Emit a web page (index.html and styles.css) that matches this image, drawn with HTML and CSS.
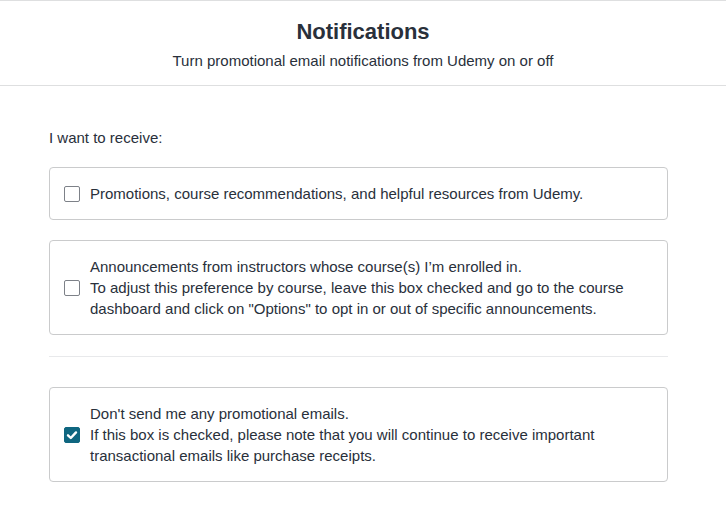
FILE: index.html
```html
<!DOCTYPE html>
<html>
<head>
<meta charset="utf-8">
<link rel="stylesheet" href="styles.css">
</head>
<body>
<header class="header">
  <h1 class="title">Notifications</h1>
  <p class="subtitle">Turn promotional email notifications from Udemy on or off</p>
</header>
<main class="content">
  <p class="lead">I want to receive:</p>
  <label class="card card-first">
    <span class="box"></span>
    <span class="text">Promotions, course recommendations, and helpful resources from Udemy.</span>
  </label>
  <label class="card">
    <span class="box"></span>
    <span class="text">Announcements from instructors whose course(s) I’m enrolled in.<br>To adjust this preference by course, leave this box checked and go to the course dashboard and click on "Options" to opt in or out of specific announcements.</span>
  </label>
  <hr class="divider">
  <label class="card">
    <span class="box checked"><svg viewBox="0 0 16 16" width="16" height="16"><path d="M4 8.3 L6.8 11 L12 5.4" fill="none" stroke="#fff" stroke-width="2.4" stroke-linecap="round" stroke-linejoin="round"/></svg></span>
    <span class="text">Don't send me any promotional emails.<br>If this box is checked, please note that you will continue to receive important transactional emails like purchase receipts.</span>
  </label>
</main>
</body>
</html>
```
FILE: styles.css
```css
html, body {
  margin: 0;
  padding: 0;
  background: #fff;
}
body {
  font-family: "Liberation Sans", Arial, sans-serif;
  color: #29303b;
  font-size: 15px;
  line-height: 21px;
}
.header {
  border-top: 1px solid #dedfe0;
  border-bottom: 1px solid #dedfe0;
  box-sizing: border-box;
  height: 86px;
  text-align: center;
  padding-top: 17px;
}
.title {
  margin: 0;
  font-size: 22px;
  line-height: 28px;
  font-weight: bold;
}
.subtitle {
  margin: 4px 0 0;
  font-size: 15px;
  line-height: 21px;
}
.content {
  margin-left: 49px;
  width: 619px;
  padding-top: 41px;
}
.lead {
  margin: 0 0 19px;
}
.card {
  display: flex;
  align-items: center;
  border: 1px solid #cacbcc;
  border-radius: 4px;
  padding: 15px 15px 15px 14px;
  margin-bottom: 20px;
}
.box {
  flex: none;
  width: 16px;
  height: 16px;
  box-sizing: border-box;
  border: 1px solid #7d8188;
  border-radius: 2px;
  margin-right: 10px;
  display: flex;
}
.box.checked {
  background: #0f6680;
  border-color: #0f6680;
}
.box.checked svg {
  margin: -1px;
}
.divider {
  border: 0;
  border-top: 1px solid #e8e9eb;
  margin: 21px 0 30px;
}
```
